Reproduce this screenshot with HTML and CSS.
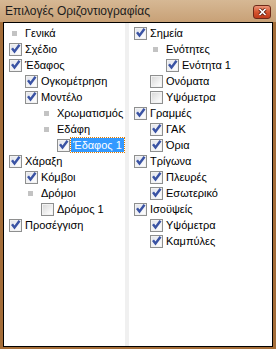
FILE: index.html
```html
<!DOCTYPE html>
<html lang="el">
<head>
<meta charset="UTF-8">
<title>Επιλογές Οριζοντιογραφίας</title>
<link rel="stylesheet" href="styles.css">
</head>
<body>
<div class="window">
	<div class="titlebar">
		<span class="title">Επιλογές Οριζοντιογραφίας</span>
		<span class="close">
			<svg width="9" height="8" viewBox="0 0 9 8"><path class="x-back" d="M1.5 1L7.5 7M7.5 1L1.5 7"/><path class="x-front" d="M1.5 1L7.5 7M7.5 1L1.5 7"/></svg>
		</span>
	</div>
	<div class="frame">
		<ul class="tree left">
			<li class="l0"><span class="bl"></span><span class="txt">Γενικά</span></li>
			<li class="l0"><span class="cb on"></span><span class="txt">Σχέδιο</span></li>
			<li class="l0"><span class="cb on"></span><span class="txt">Έδαφος</span></li>
			<li class="l1"><span class="cb on"></span><span class="txt">Ογκομέτρηση</span></li>
			<li class="l1"><span class="cb on"></span><span class="txt">Μοντέλο</span></li>
			<li class="l2"><span class="bl"></span><span class="txt">Χρωματισμός</span></li>
			<li class="l2"><span class="bl"></span><span class="txt">Εδάφη</span></li>
			<li class="l3"><span class="cb on"></span><span class="txt sel">Έδαφος 1</span></li>
			<li class="l0"><span class="cb on"></span><span class="txt">Χάραξη</span></li>
			<li class="l1"><span class="cb on"></span><span class="txt">Κόμβοι</span></li>
			<li class="l1"><span class="bl"></span><span class="txt">Δρόμοι</span></li>
			<li class="l2"><span class="cb"></span><span class="txt">Δρόμος 1</span></li>
			<li class="l0"><span class="cb on"></span><span class="txt">Προσέγγιση</span></li>
		</ul>
		<div class="splitter"></div>
		<ul class="tree right">
			<li class="l0"><span class="cb on"></span><span class="txt">Σημεία</span></li>
			<li class="l1"><span class="bl"></span><span class="txt">Ενότητες</span></li>
			<li class="l2"><span class="cb on"></span><span class="txt">Ενότητα 1</span></li>
			<li class="l1"><span class="cb"></span><span class="txt">Ονόματα</span></li>
			<li class="l1"><span class="cb"></span><span class="txt">Υψόμετρα</span></li>
			<li class="l0"><span class="cb on"></span><span class="txt">Γραμμές</span></li>
			<li class="l1"><span class="cb on"></span><span class="txt">ΓΑΚ</span></li>
			<li class="l1"><span class="cb on"></span><span class="txt">Όρια</span></li>
			<li class="l0"><span class="cb on"></span><span class="txt">Τρίγωνα</span></li>
			<li class="l1"><span class="cb on"></span><span class="txt">Πλευρές</span></li>
			<li class="l1"><span class="cb on"></span><span class="txt">Εσωτερικό</span></li>
			<li class="l0"><span class="cb on"></span><span class="txt">Ισοϋψείς</span></li>
			<li class="l1"><span class="cb on"></span><span class="txt">Υψόμετρα</span></li>
			<li class="l1"><span class="cb on"></span><span class="txt">Καμπύλες</span></li>
		</ul>
	</div>
</div>
</body>
</html>
```

FILE: styles.css
```css
body,ul,li{margin:0;padding:0;}
ul{list-style-type:none;}
body{font:11px/16px "Liberation Sans",Arial,sans-serif;color:#000;background:#fff;}

.window{width:276px;height:349px;background:#a46d38;display:flex;flex-direction:column;}

/* caption */
.titlebar{height:22px;flex:none;display:flex;align-items:center;justify-content:space-between;padding:0 5px 0 5px;box-sizing:border-box;background:linear-gradient(#d6b894,#c8a177);}
.title{font:12px/16px "Liberation Sans",Arial,sans-serif;color:#1c1c1c;}
.close{width:18px;height:14px;margin-top:1px;box-sizing:border-box;border:1px solid #6e2a18;border-radius:3px;background:linear-gradient(#ec9579,#d6562f 50%,#c03b1a);display:flex;align-items:center;justify-content:center;}
.close svg{display:block;}
.x-back{stroke:#5a1e10;stroke-width:3.2;}
.x-front{stroke:#fff;stroke-width:1.7;}

/* client area */
.frame{flex:1;display:flex;margin:0 3px 2px 3px;border:1px solid #000;background:#fff;}
.tree{padding-top:2px;}
.tree.left{width:121px;flex:none;}
.tree.right{flex:1;}
.splitter{width:4px;flex:none;background:#f0f0f0;}

.tree li{display:flex;align-items:center;height:16px;white-space:nowrap;}
.left .l0{padding-left:5px;}
.left .l1{padding-left:21px;}
.left .l2{padding-left:37px;}
.left .l3{padding-left:53px;}
.right .l0{padding-left:5px;}
.right .l1{padding-left:21px;}
.right .l2{padding-left:37px;}

/* checkbox */
.cb{position:relative;width:13px;height:13px;flex:none;box-sizing:border-box;border:1px solid #8e8f8f;background:linear-gradient(135deg,#d6d6d6,#f6f6f6 70%,#fff);box-shadow:inset 0 0 0 1px #f2f2f2;}
.cb.on{background:linear-gradient(135deg,#dfe2ea,#f8f8fa 70%,#fff);}
.cb.on::after{content:"";position:absolute;left:0;top:0;width:11px;height:11px;background:#3a53a4;clip-path:polygon(1px 5.5px,3px 4px,4.5px 6px,8.5px 0.5px,10.5px 2px,4.5px 10px);}

/* bullet for nodes without a checkbox */
.bl{width:5px;height:5px;flex:none;margin:0 5px 0 3px;background:#c3c3c3;}

.txt{margin-left:3px;}
.txt.sel{margin-left:1px;padding:0 2px;line-height:14px;background:#3399ff;color:#fff;outline:1px dotted #e07b00;}
```
